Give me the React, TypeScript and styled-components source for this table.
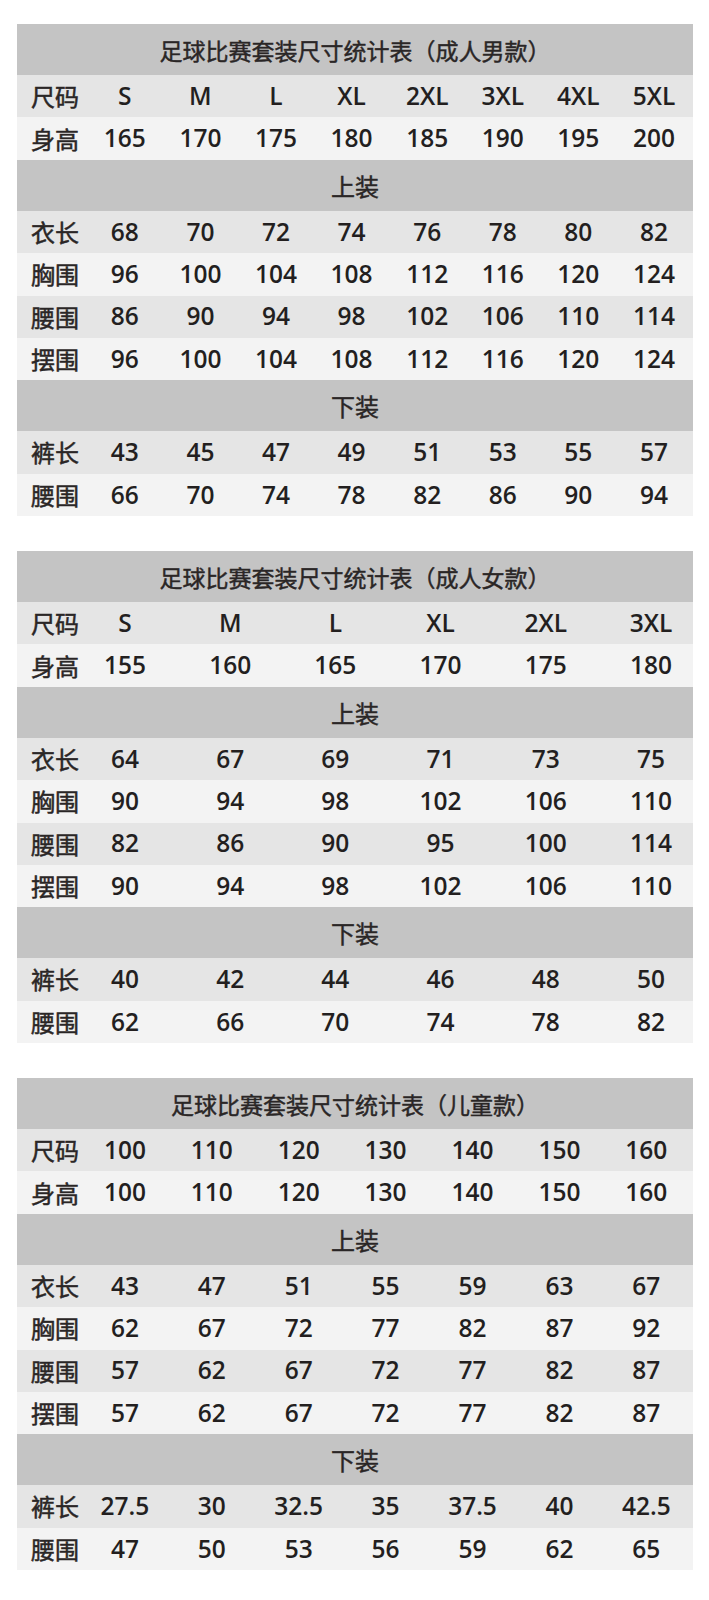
import React from "react";
import styled, { createGlobalStyle } from "styled-components";

const GlobalStyle = createGlobalStyle`
  html, body {
    margin: 0;
    padding: 0;
    background: #ffffff;
  }
  body {
    width: 709px;
    font-family: "Open Sans", "Noto Sans CJK SC", sans-serif;
    color: #231f1f;
  }
`;

const Page = styled.main`
  display: flex;
  flex-direction: column;
  gap: 35px;
  padding: 24px 16px 32px 17px;
`;

const Table = styled.section`
  display: flex;
  flex-direction: column;
  width: 676px;
`;

const Band = styled.div<{ $title?: boolean }>`
  height: 51px;
  background: #c4c4c4;
  display: flex;
  align-items: center;
  justify-content: center;
  font-family: "Noto Sans CJK SC", sans-serif;
  font-weight: 400;
  -webkit-text-stroke: 0.45px #2a2626;
  font-size: ${(p) => (p.$title ? "23px" : "24px")};
  color: #2a2626;
`;

const Row = styled.div<{ $cols: string; $light: boolean }>`
  height: 42.375px;
  display: grid;
  grid-template-columns: ${(p) => p.$cols};
  align-items: center;
  background: ${(p) => (p.$light ? "#f3f3f3" : "#e5e5e5")};
`;

const Label = styled.span`
  padding-left: 14px;
  font-family: "Noto Sans CJK SC", sans-serif;
  font-weight: 400;
  -webkit-text-stroke: 0.5px #2a2626;
  font-size: 24px;
  line-height: 1;
  white-space: nowrap;
  color: #2a2626;
`;

const Cell = styled.span`
  text-align: center;
  font-family: "Open Sans", "Noto Sans CJK SC", sans-serif;
  font-weight: 600;
  font-size: 24.5px;
  line-height: 1;
  white-space: nowrap;
`;

type Group = string[][];

type SizeTable = {
  title: string;
  cols: string;
  head: Group;
  top: Group;
  bottom: Group;
};

const tables: SizeTable[] = [
  {
    title: "足球比赛套装尺寸统计表（成人男款）",
    cols: "70px repeat(8, 75.6px)",
    head: [
      ["尺码", "S", "M", "L", "XL", "2XL", "3XL", "4XL", "5XL"],
      ["身高", "165", "170", "175", "180", "185", "190", "195", "200"],
    ],
    top: [
      ["衣长", "68", "70", "72", "74", "76", "78", "80", "82"],
      ["胸围", "96", "100", "104", "108", "112", "116", "120", "124"],
      ["腰围", "86", "90", "94", "98", "102", "106", "110", "114"],
      ["摆围", "96", "100", "104", "108", "112", "116", "120", "124"],
    ],
    bottom: [
      ["裤长", "43", "45", "47", "49", "51", "53", "55", "57"],
      ["腰围", "66", "70", "74", "78", "82", "86", "90", "94"],
    ],
  },
  {
    title: "足球比赛套装尺寸统计表（成人女款）",
    cols: "55.4px repeat(6, 105.2px)",
    head: [
      ["尺码", "S", "M", "L", "XL", "2XL", "3XL"],
      ["身高", "155", "160", "165", "170", "175", "180"],
    ],
    top: [
      ["衣长", "64", "67", "69", "71", "73", "75"],
      ["胸围", "90", "94", "98", "102", "106", "110"],
      ["腰围", "82", "86", "90", "95", "100", "114"],
      ["摆围", "90", "94", "98", "102", "106", "110"],
    ],
    bottom: [
      ["裤长", "40", "42", "44", "46", "48", "50"],
      ["腰围", "62", "66", "70", "74", "78", "82"],
    ],
  },
  {
    title: "足球比赛套装尺寸统计表（儿童款）",
    cols: "64.5px repeat(7, 86.9px)",
    head: [
      ["尺码", "100", "110", "120", "130", "140", "150", "160"],
      ["身高", "100", "110", "120", "130", "140", "150", "160"],
    ],
    top: [
      ["衣长", "43", "47", "51", "55", "59", "63", "67"],
      ["胸围", "62", "67", "72", "77", "82", "87", "92"],
      ["腰围", "57", "62", "67", "72", "77", "82", "87"],
      ["摆围", "57", "62", "67", "72", "77", "82", "87"],
    ],
    bottom: [
      ["裤长", "27.5", "30", "32.5", "35", "37.5", "40", "42.5"],
      ["腰围", "47", "50", "53", "56", "59", "62", "65"],
    ],
  },
];

function Rows({ group, cols }: { group: Group; cols: string }) {
  return (
    <>
      {group.map((r, i) => (
        <Row key={i} $cols={cols} $light={i % 2 === 1}>
          <Label>{r[0]}</Label>
          {r.slice(1).map((v, j) => (
            <Cell key={j}>{v}</Cell>
          ))}
        </Row>
      ))}
    </>
  );
}

export default function App() {
  return (
    <>
      <GlobalStyle />
      <Page>
        {tables.map((t, k) => (
          <Table key={k}>
            <Band $title>{t.title}</Band>
            <Rows group={t.head} cols={t.cols} />
            <Band>上装</Band>
            <Rows group={t.top} cols={t.cols} />
            <Band>下装</Band>
            <Rows group={t.bottom} cols={t.cols} />
          </Table>
        ))}
      </Page>
    </>
  );
}
